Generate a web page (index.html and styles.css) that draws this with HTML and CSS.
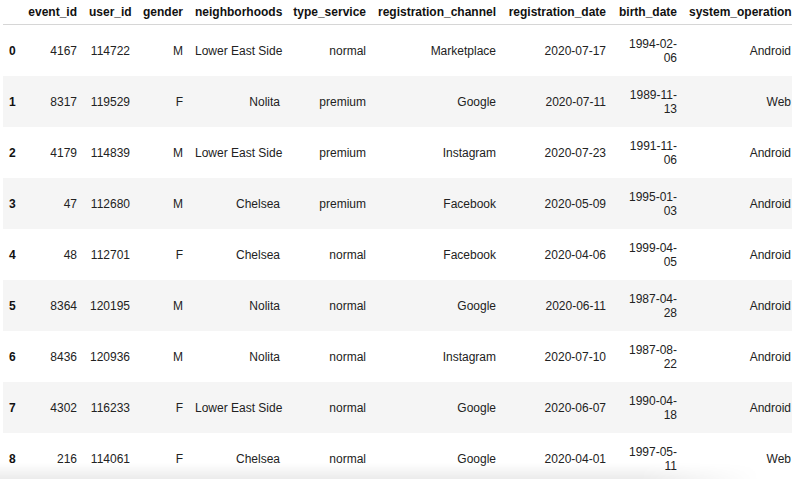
FILE: index.html
```html
<!DOCTYPE html>
<html>
<head>
<meta charset="utf-8">
<link rel="stylesheet" href="styles.css">
</head>
<body>
<div class="frame">
  <div class="output">
    <table class="dataframe">
      <colgroup>
        <col class="c-idx"><col class="c-event"><col class="c-user"><col class="c-gender"><col class="c-neigh"><col class="c-type"><col class="c-chan"><col class="c-reg"><col class="c-birth"><col class="c-sys">
      </colgroup>
      <thead>
        <tr>
          <th></th><th>event_id</th><th>user_id</th><th>gender</th><th>neighborhoods</th><th>type_service</th><th>registration_channel</th><th>registration_date</th><th>birth_date</th><th>system_operation</th>
        </tr>
      </thead>
      <tbody>
        <tr><th>0</th><td>4167</td><td>114722</td><td>M</td><td>Lower East Side</td><td>normal</td><td>Marketplace</td><td>2020-07-17</td><td>1994-02-<br>06</td><td>Android</td></tr>
        <tr><th>1</th><td>8317</td><td>119529</td><td>F</td><td>Nolita</td><td>premium</td><td>Google</td><td>2020-07-11</td><td>1989-11-<br>13</td><td>Web</td></tr>
        <tr><th>2</th><td>4179</td><td>114839</td><td>M</td><td>Lower East Side</td><td>premium</td><td>Instagram</td><td>2020-07-23</td><td>1991-11-<br>06</td><td>Android</td></tr>
        <tr><th>3</th><td>47</td><td>112680</td><td>M</td><td>Chelsea</td><td>premium</td><td>Facebook</td><td>2020-05-09</td><td>1995-01-<br>03</td><td>Android</td></tr>
        <tr><th>4</th><td>48</td><td>112701</td><td>F</td><td>Chelsea</td><td>normal</td><td>Facebook</td><td>2020-04-06</td><td>1999-04-<br>05</td><td>Android</td></tr>
        <tr><th>5</th><td>8364</td><td>120195</td><td>M</td><td>Nolita</td><td>normal</td><td>Google</td><td>2020-06-11</td><td>1987-04-<br>28</td><td>Android</td></tr>
        <tr><th>6</th><td>8436</td><td>120936</td><td>M</td><td>Nolita</td><td>normal</td><td>Instagram</td><td>2020-07-10</td><td>1987-08-<br>22</td><td>Android</td></tr>
        <tr><th>7</th><td>4302</td><td>116233</td><td>F</td><td>Lower East Side</td><td>normal</td><td>Google</td><td>2020-06-07</td><td>1990-04-<br>18</td><td>Android</td></tr>
        <tr><th>8</th><td>216</td><td>114061</td><td>F</td><td>Chelsea</td><td>normal</td><td>Google</td><td>2020-04-01</td><td>1997-05-<br>11</td><td>Web</td></tr>
      </tbody>
    </table>
  </div>
  <div class="shade"></div>
</div>
</body>
</html>
```

FILE: styles.css
```css
html, body {
  margin: 0;
  padding: 0;
  background: #ffffff;
}

.frame {
  position: relative;
  width: 800px;
  height: 479px;
  overflow: hidden;
}

.output {
  margin-left: 3px;
  width: 789px;
  overflow: hidden;
}

.dataframe {
  border-collapse: collapse;
  table-layout: fixed;
  width: 794px;
  font-family: "Liberation Sans", Arial, sans-serif;
  font-size: 12px;
  color: #222222;
}

.c-idx { width: 19px; }
.c-event { width: 61px; }
.c-user { width: 53px; }
.c-gender { width: 53px; }
.c-neigh { width: 97px; }
.c-type { width: 86px; }
.c-chan { width: 130px; }
.c-reg { width: 110px; }
.c-birth { width: 71px; }
.c-sys { width: 114px; }

.dataframe th,
.dataframe td {
  padding: 0 6px;
  text-align: right;
  vertical-align: middle;
  white-space: nowrap;
  line-height: 14px;
}

.dataframe thead th {
  height: 24px;
  font-weight: bold;
  border-bottom: 1px solid #d6d6d6;
  color: #111111;
}

.dataframe tbody th,
.dataframe tbody td {
  height: 51px;
}

.dataframe tbody th {
  text-align: left;
  font-weight: bold;
  color: #111111;
}

.dataframe tbody tr:nth-child(odd) {
  background: #ffffff;
}

.dataframe tbody tr:nth-child(even) {
  background: #f5f5f5;
}

.shade {
  position: absolute;
  left: 0;
  right: 0;
  bottom: 0;
  height: 16px;
  background: linear-gradient(to bottom, rgba(0, 0, 0, 0), rgba(0, 0, 0, 0.08));
  -webkit-mask-image: linear-gradient(to right, #000 0%, #000 80%, rgba(0, 0, 0, 0) 95%);
  mask-image: linear-gradient(to right, #000 0%, #000 80%, rgba(0, 0, 0, 0) 95%);
  pointer-events: none;
}
```
